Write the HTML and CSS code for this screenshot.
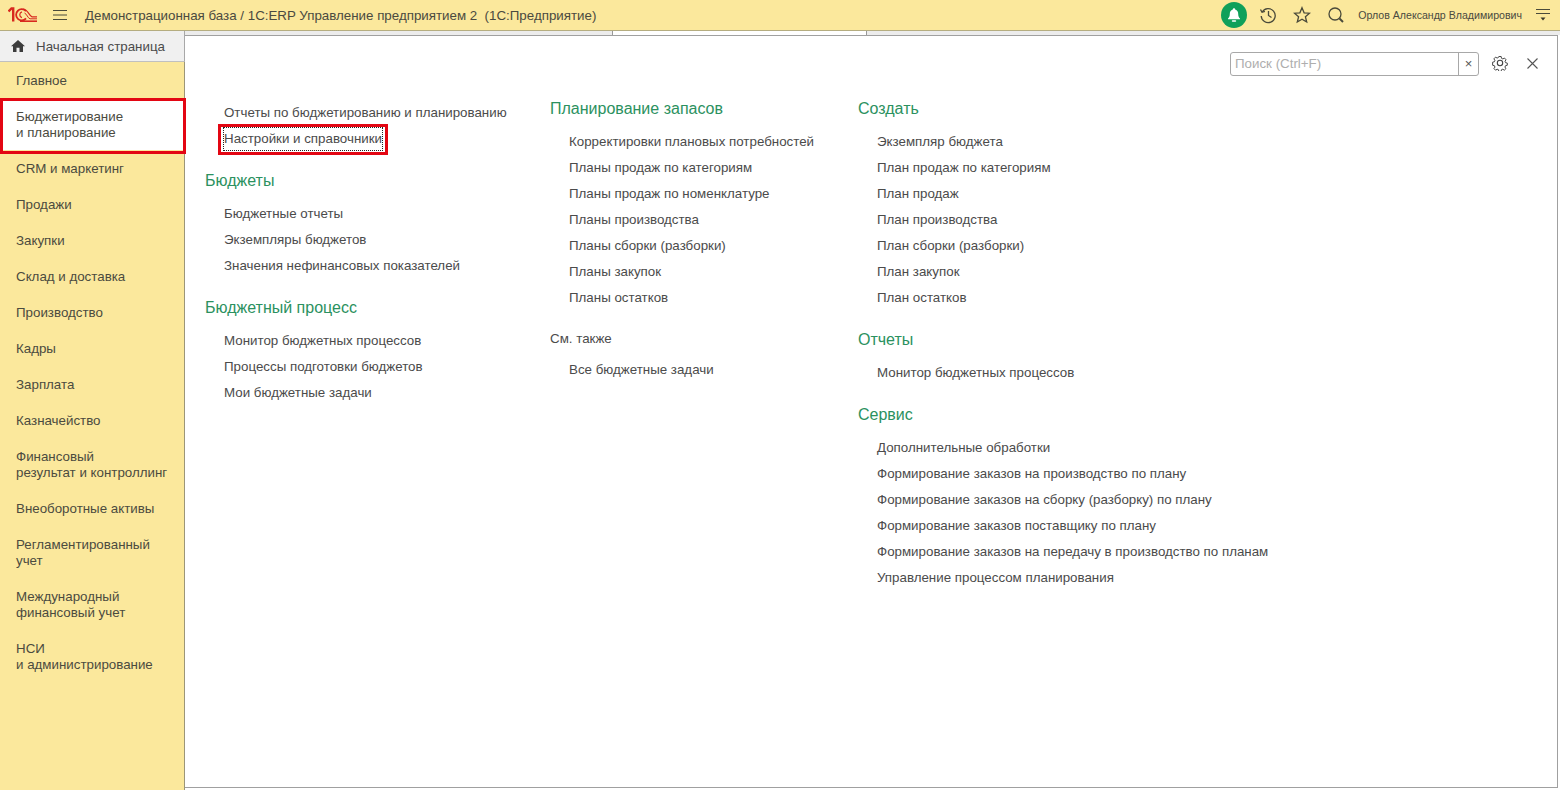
FILE: index.html
```html
<!DOCTYPE html>
<html lang="ru">
<head>
<meta charset="utf-8">
<title>1С:ERP</title>
<link rel="stylesheet" href="styles.css">
</head>
<body>
<header class="topbar">
  <svg class="logo" width="30" height="16" viewBox="0 0 30 16" fill="none" stroke="#d8281e">
    <path d="M0.500 4.500 L3.500 1.500 H5.200 V14.500" stroke-width="2.400"/>
    <path d="M18 4.200 A5.600 5.600 0 1 0 18 11.400" stroke-width="1.800"/>
    <path d="M14 4.800 A3 3 0 0 0 14 10.600" stroke-width="1.200"/>
    <path d="M15 2.200 C20 2.200 21 9 24 9.800 H29" stroke-width="1.200"/>
    <path d="M16.500 6 C19 7 19.500 11 22 11.800 H29" stroke-width="1"/>
    <path d="M12 14.200 H29" stroke-width="1.600"/>
  </svg>
  <svg class="burger" width="14" height="12" viewBox="0 0 14 12" stroke="#4a4a3a" stroke-width="1.200">
    <path d="M0 1.500H14M0 6H14M0 10.500H14"/>
  </svg>
  <div class="app-title">Демонстрационная база / 1С:ERP Управление предприятием 2&nbsp; (1С:Предприятие)</div>
  <div class="bell">
    <svg width="16" height="16" viewBox="0 0 16 16" fill="#fff">
      <path d="M8 1.200a1.200 1.200 0 0 1 1.200 1.300C11.400 3.100 12.200 5 12.200 7c0 2.400.7 3.400 1.800 4.600v.7H2v-.7C3.100 10.400 3.800 9.400 3.800 7c0-2 .8-3.900 3-4.500A1.200 1.200 0 0 1 8 1.200z"/>
      <rect x="5.800" y="13.200" width="4.400" height="1.600" rx=".8"/>
    </svg>
  </div>
  <svg class="tool tool-history" width="18" height="18" viewBox="0 0 18 18" fill="none" stroke="#4a4a3a" stroke-width="1.300">
    <path d="M3.200 6A7 7 0 1 1 2.200 10"/>
    <path d="M1.500 3.500 L3 6.300 L5.900 5.300"/>
    <path d="M9.500 5V9.500L12.500 11.500"/>
  </svg>
  <svg class="tool tool-star" width="18" height="18" viewBox="0 0 18 18" fill="none" stroke="#4a4a3a" stroke-width="1.300">
    <path d="M9 1.800 L11.100 6.800 L16.500 7.200 L12.400 10.700 L13.700 16 L9 13.200 L4.300 16 L5.600 10.700 L1.500 7.200 L6.900 6.800 Z"/>
  </svg>
  <svg class="tool tool-search" width="18" height="18" viewBox="0 0 18 18" fill="none" stroke="#4a4a3a">
    <circle cx="8" cy="8" r="6" stroke-width="1.300"/>
    <path d="M12.500 12.500 L16 16" stroke-width="2"/>
  </svg>
  <div class="user">Орлов Александр Владимирович</div>
  <svg class="user-menu" width="14" height="14" viewBox="0 0 14 14" stroke="#4a4a3a" stroke-width="1.100">
    <path d="M0 1.500H14M0 5.500H14"/>
    <path d="M4.500 9.500H9.500L7 12.500Z" fill="#3a3a2a" stroke="none"/>
  </svg>
</header>

<div class="workspace">
  <aside class="sidebar">
    <div class="home">
      <svg class="home-icon" width="14" height="12" viewBox="0 0 14 12" fill="#3c3c3c">
        <path d="M7 0 L14 6.300 H12 V12 H8.500 V7.800 H5.500 V12 H2 V6.300 H0 Z"/>
      </svg>
      <span>Начальная страница</span>
    </div>
    <nav class="nav">
      <a class="nav-item">Главное</a>
      <a class="nav-item nav-item-selected">Бюджетирование<br>и планирование</a>
      <a class="nav-item">CRM и маркетинг</a>
      <a class="nav-item">Продажи</a>
      <a class="nav-item">Закупки</a>
      <a class="nav-item">Склад и доставка</a>
      <a class="nav-item">Производство</a>
      <a class="nav-item">Кадры</a>
      <a class="nav-item">Зарплата</a>
      <a class="nav-item">Казначейство</a>
      <a class="nav-item">Финансовый<br>результат и контроллинг</a>
      <a class="nav-item">Внеоборотные активы</a>
      <a class="nav-item">Регламентированный<br>учет</a>
      <a class="nav-item">Международный<br>финансовый учет</a>
      <a class="nav-item">НСИ<br>и администрирование</a>
    </nav>
  </aside>

  <main class="main">
    <div class="tabstrip"><div class="tab-gap"></div><div class="tab-active"></div><div class="tab-rest"></div></div>
    <section class="panel">
      <div class="panel-head">
        <div class="search">
          <div class="search-input">Поиск (Ctrl+F)</div>
          <div class="search-clear">×</div>
        </div>
        <svg class="gear" width="16" height="16" viewBox="0 0 16 16" fill="none" stroke="#444" stroke-width="1.100">
          <path d="M6.700 .8h2.600l.4 2 1.500.7 1.800-1 1.700 1.900-1.100 1.700.5 1.500 2 .5v2.400l-2 .5-.6 1.500 1.100 1.700-1.800 1.800-1.700-1.100-1.500.6-.4 2H6.700l-.4-2-1.500-.6-1.700 1.100-1.800-1.800 1.100-1.700-.6-1.500-2-.5V7.100l2-.5.500-1.500-1.100-1.700 1.800-1.900 1.800 1 1.500-.7z" transform="translate(.8 .8) scale(.9)"/>
          <circle cx="8" cy="8" r="2.700"/>
        </svg>
        <svg class="close" width="11" height="11" viewBox="0 0 11 11" stroke="#555" stroke-width="1.100">
          <path d="M.5 .5L10.500 10.500M10.500 .5L.5 10.500"/>
        </svg>
      </div>
      <div class="columns">
        <div class="col col-first">
          <ul class="links">
            <li><a>Отчеты по бюджетированию и планированию</a></li>
            <li><a class="focused">Настройки и справочники</a></li>
          </ul>
          <h2>Бюджеты</h2>
          <ul class="links">
            <li><a>Бюджетные отчеты</a></li>
            <li><a>Экземпляры бюджетов</a></li>
            <li><a>Значения нефинансовых показателей</a></li>
          </ul>
          <h2>Бюджетный процесс</h2>
          <ul class="links">
            <li><a>Монитор бюджетных процессов</a></li>
            <li><a>Процессы подготовки бюджетов</a></li>
            <li><a>Мои бюджетные задачи</a></li>
          </ul>
        </div>
        <div class="col">
          <h2>Планирование запасов</h2>
          <ul class="links">
            <li><a>Корректировки плановых потребностей</a></li>
            <li><a>Планы продаж по категориям</a></li>
            <li><a>Планы продаж по номенклатуре</a></li>
            <li><a>Планы производства</a></li>
            <li><a>Планы сборки (разборки)</a></li>
            <li><a>Планы закупок</a></li>
            <li><a>Планы остатков</a></li>
          </ul>
          <h3>См. также</h3>
          <ul class="links">
            <li><a>Все бюджетные задачи</a></li>
          </ul>
        </div>
        <div class="col">
          <h2>Создать</h2>
          <ul class="links">
            <li><a>Экземпляр бюджета</a></li>
            <li><a>План продаж по категориям</a></li>
            <li><a>План продаж</a></li>
            <li><a>План производства</a></li>
            <li><a>План сборки (разборки)</a></li>
            <li><a>План закупок</a></li>
            <li><a>План остатков</a></li>
          </ul>
          <h2>Отчеты</h2>
          <ul class="links">
            <li><a>Монитор бюджетных процессов</a></li>
          </ul>
          <h2>Сервис</h2>
          <ul class="links">
            <li><a>Дополнительные обработки</a></li>
            <li><a>Формирование заказов на производство по плану</a></li>
            <li><a>Формирование заказов на сборку (разборку) по плану</a></li>
            <li><a>Формирование заказов поставщику по плану</a></li>
            <li><a>Формирование заказов на передачу в производство по планам</a></li>
            <li><a>Управление процессом планирования</a></li>
          </ul>
        </div>
      </div>
    </section>
  </main>
</div>
</body>
</html>
```

FILE: styles.css
```css
* { box-sizing: border-box; }
html, body { margin: 0; height: 100%; overflow: hidden; }
body {
  width: 1560px;
  height: 790px;
  display: flex;
  flex-direction: column;
  background: #fff;
  color: #4b4b4b;
  font-family: "Liberation Sans", Arial, sans-serif;
  font-size: 13.33px;
}

/* top bar */
.topbar {
  height: 31px;
  flex: none;
  display: flex;
  align-items: center;
  background: #fbe89c;
  border-bottom: 1px solid #b5ad80;
}
.logo { margin-left: 8px; flex: none; }
.burger { margin-left: 15px; flex: none; }
.app-title { margin-left: 18px; flex: 1; font-size: 13.33px; color: #4a4a40; white-space: nowrap; }
.bell {
  width: 26px; height: 26px; flex: none;
  border-radius: 50%;
  background: #10a05a;
  display: flex; align-items: center; justify-content: center;
}
.tool { flex: none; }
.tool-history { margin-left: 12px; }
.tool-star { margin-left: 16px; }
.tool-search { margin-left: 16px; }
.user { margin-left: 13px; font-size: 10.6px; color: #4a4a40; white-space: nowrap; }
.user-menu { margin-left: 14px; margin-right: 10px; flex: none; }

/* workspace */
.workspace { flex: 1; min-height: 0; display: flex; }
.sidebar {
  width: 185px; flex: none;
  background: #fbe89c;
  border-right: 1px solid #9c9678;
  display: flex; flex-direction: column;
}
.home {
  height: 31px; flex: none;
  display: flex; align-items: center;
  background: #f0f0f0;
  border-bottom: 1px solid #c0c0c0;
  margin-right: -1px;
  border-right: 1px solid #a8a8a8;
}
.home-icon { margin-left: 11px; margin-right: 11px; }
.nav { display: flex; flex-direction: column; }
.nav-item {
  position: relative;
  display: block;
  padding: 11px 16px 9px;
  line-height: 16px;
  color: #4b4b3f;
}
.nav-item-selected { background: #fff; }
.nav-item-selected::after {
  content: "";
  position: absolute;
  left: 0; top: 0; right: -2px; bottom: -4px;
  border: 3px solid #e30613;
  z-index: 2;
}

/* main */
.main { flex: 1; min-width: 0; display: flex; flex-direction: column; }
.tabstrip { height: 4px; flex: none; display: flex; }
.tab-gap { width: 427px; background: #ececec; }
.tab-active { width: 255px; background: #fff; border-left: 1px solid #999; border-right: 1px solid #999; }
.tab-rest { flex: 1; background: #ececec; }
.panel {
  flex: 1; min-height: 0;
  margin-right: 2px; margin-bottom: 2px;
  border-top: 1px solid #a0a0a0;
  border-right: 1px solid #a0a0a0;
  border-bottom: 1px solid #a0a0a0;
  display: flex; flex-direction: column;
}
.panel-head {
  height: 60px; flex: none;
  padding-top: 16px;
  display: flex; align-items: flex-start; justify-content: flex-end;
}
.search {
  width: 249px; height: 24px;
  display: flex;
  border: 1px solid #a8a8a8;
  border-radius: 3px;
  background: #fff;
}
.search-input { flex: 1; padding-left: 4px; line-height: 21px; color: #aeaeae; border-right: 1px solid #a8a8a8; }
.search-clear { width: 19px; text-align: center; line-height: 21px; font-size: 13px; color: #555; }
.gear { margin-left: 13px; margin-top: 3px; }
.close { margin-left: 19px; margin-right: 19px; margin-top: 6px; }

.columns { display: grid; grid-template-columns: 345px 308px 1fr; padding-left: 20px; }
.col-first { padding-top: 4px; }
h2 {
  margin: 16px 0 7px;
  height: 26px;
  font-size: 16px;
  font-weight: 400;
  line-height: 26px;
  color: #2b9160;
}
.col > h2:first-child { margin-top: 0; }
h3 {
  margin: 15px 0 5px;
  height: 26px;
  font-size: 13.33px;
  font-weight: 400;
  line-height: 26px;
  color: #4b4b4b;
}
.links { margin: 0; padding: 0 0 0 19px; list-style: none; }
.links li { height: 26px; line-height: 26px; white-space: nowrap; }
.links a { color: #4b4b4b; }
.focused {
  position: relative;
  display: inline-block;
  line-height: 22px;
  outline: 1px dotted #222;
  outline-offset: 0;
}
.focused::after {
  content: "";
  position: absolute;
  left: -6px; right: -6px; top: -4px; bottom: -5px;
  border: 3px solid #e30613;
}
```
